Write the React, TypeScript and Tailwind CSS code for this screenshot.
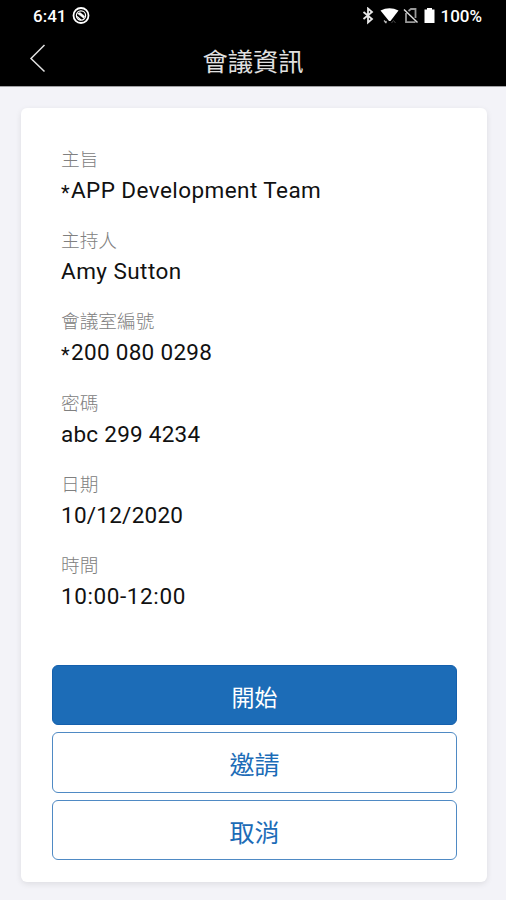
type Field = { label: string; value: string; starred?: boolean; valueClass: string };

const fields: Field[] = [
  { label: "主旨", value: "APP Development Team", starred: true, valueClass: "tracking-[0.43px]" },
  { label: "主持人", value: "Amy Sutton", valueClass: "tracking-[0.45px]" },
  { label: "會議室編號", value: "200 080 0298", starred: true, valueClass: "tracking-[0.3px]" },
  { label: "密碼", value: "abc 299 4234", valueClass: "tracking-[0.25px]" },
  { label: "日期", value: "10/12/2020", valueClass: "tracking-[0.25px]" },
  { label: "時間", value: "10:00-12:00", valueClass: "tracking-[0.6px]" },
];

const buttonClasses =
  "flex w-full items-center justify-center rounded-[6px] border leading-none";

function StatusBar() {
  return (
    <div className="flex h-8 items-center pr-[24px] pl-[33px] text-white">
      <span className="text-[17px] leading-8 font-medium">6:41</span>
      <svg className="ml-[6px] size-[18px]" viewBox="0 0 18 18" fill="none" stroke="#fff">
        <circle cx="9" cy="8.5" r="7.5" strokeWidth="1.8" />
        <circle cx="9" cy="8.5" r="4.6" strokeWidth="1.2" />
        <path d="M5.500 6.500 8 5.500l4.500 3.500-.5 2.500Z" fill="#fff" strokeWidth="0.5" />
        <path d="m5 9.500 4 3.500" strokeWidth="1.200" />
      </svg>
      <div className="ml-auto flex items-center">
        <svg className="h-[18px] w-[12px]" viewBox="0 0 12 18" fill="none" stroke="#e8e8e8" strokeWidth="1.800">
          <path d="m1.500 5 8.500 7-4 3.500v-14L10 5l-8.500 7" />
        </svg>
        <svg className="ml-[6px] h-[18px] w-[19px]" viewBox="0 0 19 18">
          <path d="M.5 3.500Q9.500-1 18.500 3.500L10.500 14H9Z" fill="#fff" />
          <path d="m4 13.500 2.500 2.500m0-2-1.500 2" stroke="#bbb" strokeWidth="1.200" />
          <path d="m11.500 16 2-2.500 2 2.500" stroke="#444" fill="none" />
        </svg>
        <svg className="ml-[4px] h-[18px] w-[16px]" viewBox="0 0 16 18" fill="none">
          <path d="M5.500 4 8 2h4.500v9M3 6v9.200h9.500" stroke="#999" strokeWidth="1.800" />
          <path d="m1 2.500 13.500 13" stroke="#ddd" strokeWidth="1.500" />
        </svg>
        <svg className="ml-[5px] h-[18px] w-[11px]" viewBox="0 0 11 18" fill="#fff">
          <path d="M3 1h5v1.500h2.500v13.500H.5V2.500H3Z" />
        </svg>
        <span className="ml-[5px] text-[17px] leading-8 font-medium">100%</span>
      </div>
    </div>
  );
}

export default function App() {
  return (
    <div className="flex h-[900px] w-[506px] flex-col overflow-hidden bg-[#f3f3f8] font-['Roboto','Noto_Sans_CJK_TC',sans-serif]">
      <header className="h-[87px] shrink-0 border-b border-[#a0a0a3] bg-black">
        <StatusBar />
        <div className="grid h-[54px] grid-cols-[60px_1fr_60px] items-center">
          <button aria-label="返回" className="flex pl-[29px]">
            <svg className="h-[30px] w-[17px]" viewBox="0 0 17 30" fill="none" stroke="#e0e0e0" strokeWidth="1.500">
              <path d="M15.500 1 2 14.500 15.500 27.500" />
            </svg>
          </button>
          <h1 className="pt-[7px] text-center text-[25.3px] leading-[47px] text-[#e0e0e0]">會議資訊</h1>
        </div>
      </header>

      <main className="mt-[21px] mr-[19px] ml-[21px] flex h-[774px] shrink-0 flex-col rounded-[6px] bg-white pt-[40px] shadow-[0_2px_6px_rgba(0,0,0,0.09)]">
        <dl className="flex flex-col pl-[40px]">
          {fields.map((f) => (
            <div key={f.label} className="h-[81.2px]">
              <dt className="text-[18.7px] leading-[25px] font-light text-[#808080]">{f.label}</dt>
              <dd className={`flex text-[22.5px] leading-[35px] text-[#111] ${f.valueClass}`}>
                {f.starred && <span className="w-[10px] pt-[3px] text-[20px]">*</span>}
                {f.value}
              </dd>
            </div>
          ))}
        </dl>

        <div className="mt-auto mr-[30px] mb-[22px] ml-[31px] flex flex-col gap-[7px]">
          <button className={`${buttonClasses} h-[60px] border-[#1460ad] bg-[#1c6cb7] pt-[6px] text-[23px] text-white`}>
            開始
          </button>
          <button className={`${buttonClasses} h-[61px] border-[#4f8ac4] bg-white pt-[6px] text-[25px] text-[#1c6cb7]`}>
            邀請
          </button>
          <button className={`${buttonClasses} h-[60px] border-[#4f8ac4] bg-white pt-[6px] text-[25px] text-[#1c6cb7]`}>
            取消
          </button>
        </div>
      </main>
    </div>
  );
}
